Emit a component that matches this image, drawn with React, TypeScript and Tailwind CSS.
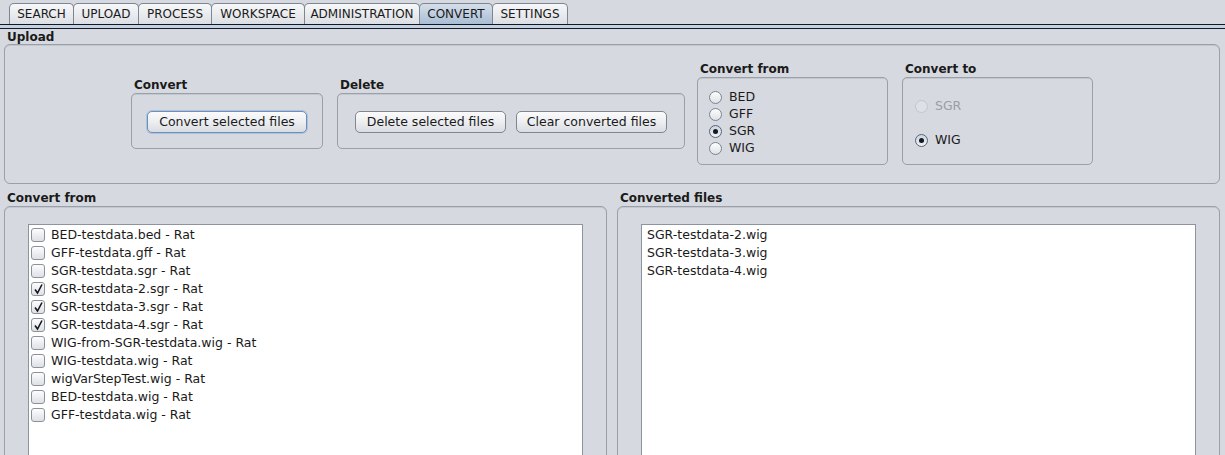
import { ReactNode } from "react";

const tabs = [
  { name: "SEARCH", w: "w-[65px]" },
  { name: "UPLOAD", w: "w-[66px]" },
  { name: "PROCESS", w: "w-[74px]" },
  { name: "WORKSPACE", w: "w-[94px]" },
  { name: "ADMINISTRATION", w: "w-[116px]" },
  { name: "CONVERT", w: "w-[74px]" },
  { name: "SETTINGS", w: "w-[76px]" },
];

const files = [
  { name: "BED-testdata.bed - Rat", checked: false },
  { name: "GFF-testdata.gff - Rat", checked: false },
  { name: "SGR-testdata.sgr - Rat", checked: false },
  { name: "SGR-testdata-2.sgr - Rat", checked: true },
  { name: "SGR-testdata-3.sgr - Rat", checked: true },
  { name: "SGR-testdata-4.sgr - Rat", checked: true },
  { name: "WIG-from-SGR-testdata.wig - Rat", checked: false },
  { name: "WIG-testdata.wig - Rat", checked: false },
  { name: "wigVarStepTest.wig - Rat", checked: false },
  { name: "BED-testdata.wig - Rat", checked: false },
  { name: "GFF-testdata.wig - Rat", checked: false },
];

const converted = ["SGR-testdata-2.wig", "SGR-testdata-3.wig", "SGR-testdata-4.wig"];

const Titled = ({ title, box, children }: { title: string; box: string; children: ReactNode }) => (
  <div className="flex flex-col">
    <div className="h-[16px] leading-[16px] pl-[3px] font-bold text-[12px]">{title}</div>
    <div className={`border border-[#9aa0a9] rounded-[5px] shadow-[inset_0_1px_0_#c3c7ce] ${box}`}>{children}</div>
  </div>
);

const Button = ({ label, w, focused }: { label: string; w: string; focused?: boolean }) => (
  <button
    className={`${w} h-[22px] rounded-[5px] border text-[12.5px] text-[#1a1a1a] bg-gradient-to-b from-[#fbfbfc] via-[#eceef1] to-[#d9dce1] ${
      focused ? "border-[#6f8fb5] shadow-[0_0_0_1px_#a9c2df]" : "border-[#80868f]"
    }`}
  >
    {label}
  </button>
);

const Radio = ({ label, on, disabled }: { label: string; on?: boolean; disabled?: boolean }) => (
  <div className={`h-[17px] flex items-center gap-[7px] text-[12.5px] ${disabled ? "text-[#9a9ea5]" : "text-[#1a1a1a]"}`}>
    <span
      className={`w-[13px] h-[13px] rounded-full border flex items-center justify-center ${
        disabled
          ? "border-[#c3c7cd] bg-[#dde0e4]"
          : on
          ? "border-[#5b6470] bg-gradient-to-b from-[#c9d6e6] to-[#eef2f7]"
          : "border-[#7c848f] bg-gradient-to-b from-[#fdfdfd] to-[#dfe2e6]"
      }`}
    >
      {on && <span className="w-[5px] h-[5px] rounded-full bg-[#17191c]" />}
    </span>
    {label}
  </div>
);

const Check = ({ checked }: { checked: boolean }) => (
  <span className="w-[14px] h-[14px] rounded-[3px] border border-[#8a919b] bg-gradient-to-b from-[#fdfdfe] to-[#dde0e5] flex items-center justify-center">
    {checked && (
      <svg width="11" height="11" viewBox="0 0 11 11">
        <path d="M2 5.5 L4.5 9 L9 0.5" fill="none" stroke="#15181c" strokeWidth="1.6" />
      </svg>
    )}
  </span>
);

const App = () => {
  return (
    <div className="w-[1225px] h-[455px] overflow-hidden bg-[#d6d9df] text-[#1a1a1a] font-['DejaVu_Sans',sans-serif] text-[12px]">
      {/* tab strip */}
      <div className="h-[24px] flex items-end pl-[9px]">
        {tabs.map((t, i) => (
          <div
            key={t.name}
            className={`${t.w} ${i > 0 ? "-ml-px" : ""} h-[21px] rounded-t-[5px] border border-b-0 border-[#7e8691] flex items-center justify-center text-[12px] ${
              t.name === "CONVERT"
                ? "bg-gradient-to-b from-[#d5dfeb] to-[#a9bdd3]"
                : "bg-gradient-to-b from-[#f7f8f9] to-[#dcdfe4]"
            }`}
          >
            {t.name}
          </div>
        ))}
      </div>
      <div className="h-[5px] border-y border-[#101a2a] bg-[#c6d2e0]" />

      {/* upload */}
      <div className="h-[15px] leading-[17px] pl-[7px] font-bold">Upload</div>
      <div className="ml-[4px] mr-[5px] h-[140px] border border-[#9aa0a9] rounded-[6px] shadow-[inset_0_1px_0_#c3c7ce] flex items-center justify-center pb-[2px]">
        <Titled title="Convert" box="w-[192px] h-[56px] flex items-center justify-center pt-[2px]">
          <Button label="Convert selected files" w="w-[160px]" focused />
        </Titled>
        <div className="ml-[14px]">
          <Titled title="Delete" box="w-[348px] h-[56px] flex items-center justify-center gap-[10px] pt-[2px]">
            <Button label="Delete selected files" w="w-[151px]" />
            <Button label="Clear converted files" w="w-[151px]" />
          </Titled>
        </div>
        <div className="ml-[12px]">
          <Titled title="Convert from" box="w-[191px] h-[88px] pl-[11px] pt-[11px]">
            <Radio label="BED" />
            <Radio label="GFF" />
            <Radio label="SGR" on />
            <Radio label="WIG" />
          </Titled>
        </div>
        <div className="ml-[14px]">
          <Titled title="Convert to" box="w-[191px] h-[88px] pl-[12px] pt-[20px] flex flex-col gap-[17px]">
            <Radio label="SGR" disabled />
            <Radio label="WIG" on />
          </Titled>
        </div>
      </div>

      {/* lists */}
      <div className="flex gap-[10px] pl-[4px] pr-[5px] mt-[6px]">
        <div className="flex-1 flex flex-col">
          <div className="h-[16px] leading-[16px] pl-[3px] font-bold">Convert from</div>
          <div className="h-[260px] border border-[#9aa0a9] rounded-t-[6px] shadow-[inset_0_1px_0_#c3c7ce] px-[23px] pt-[17px]">
            <div className="h-[260px] bg-white border border-[#8d94a0] pl-[2px] pt-[1px] text-[12.5px]">
              {files.map((f) => (
                <div key={f.name} className="h-[18px] flex items-center gap-[6px]">
                  <Check checked={f.checked} />
                  <span>{f.name}</span>
                </div>
              ))}
            </div>
          </div>
        </div>
        <div className="flex-1 flex flex-col">
          <div className="h-[16px] leading-[16px] pl-[3px] font-bold">Converted files</div>
          <div className="h-[260px] border border-[#9aa0a9] rounded-t-[6px] shadow-[inset_0_1px_0_#c3c7ce] px-[23px] pt-[17px]">
            <div className="h-[260px] bg-white border border-[#8d94a0] pl-[5px] pt-[1px] text-[12.5px]">
              {converted.map((c) => (
                <div key={c} className="h-[18px] flex items-center">
                  {c}
                </div>
              ))}
            </div>
          </div>
        </div>
      </div>
    </div>
  );
};

export default App;
